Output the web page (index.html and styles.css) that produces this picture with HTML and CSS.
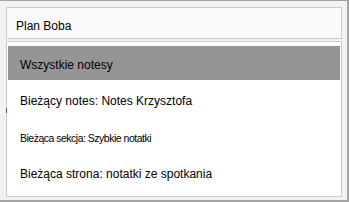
FILE: index.html
```html
<!DOCTYPE html>
<html lang="pl">
<head>
  <meta charset="UTF-8" />
  <meta name="viewport" content="width=device-width, initial-scale=1.0" />
  <title>Wyszukiwanie</title>
  <link rel="stylesheet" href="styles.css">
</head>
<body>

  <div class="frame">
    <div class="search-box">Plan Boba</div>

    <div class="scope-list">
      <div class="scope-item selected">Wszystkie notesy</div>
      <div class="scope-item">Bieżący notes: Notes Krzysztofa</div>
      <div class="scope-item small">Bieżąca sekcja: Szybkie notatki</div>
      <div class="scope-item last">Bieżąca strona: notatki ze spotkania</div>
      <span class="mark"></span>
    </div>
  </div>

</body>
</html>
```

FILE: styles.css
```css
body {
  margin: 0;
  font-family: 'Liberation Sans', Arial, sans-serif;
  background: #f2f2f2;
  color: #000;
}
.frame {
  height: 202px;
  box-sizing: border-box;
  border-top: 1px solid #a3a3a3;
  border-right: 2px solid #a3a3a3;
  border-bottom: 2px solid #a3a3a3;
  padding: 6px 5px 0 6px;
}
.search-box {
  height: 32px;
  box-sizing: border-box;
  border: 1px solid #cbcbcb;
  background: #fafafa;
  padding: 11px 0 0 9px;
  font-size: 12px;
  line-height: 14px;
}
.scope-list {
  position: relative;
  margin-top: 2px;
  height: 156px;
  box-sizing: border-box;
  border: 1px solid #cbcbcb;
  background: #fff;
  padding: 4px 1px 0 1px;
}
.scope-item {
  height: 35px;
  box-sizing: border-box;
  padding: 14px 0 0 12px;
  font-size: 12px;
  line-height: 14px;
}
.scope-item.selected {
  height: 34px;
  padding-top: 12px;
  background: #959595;
}
.scope-item.small {
  height: 37px;
  padding-top: 16px;
  font-size: 10.5px;
  letter-spacing: -0.5px;
}
.scope-item.last {
  padding-top: 15px;
}
.mark {
  position: absolute;
  left: -1px;
  top: 66px;
  width: 1px;
  height: 5px;
  background: #7a3ea0;
}
```
